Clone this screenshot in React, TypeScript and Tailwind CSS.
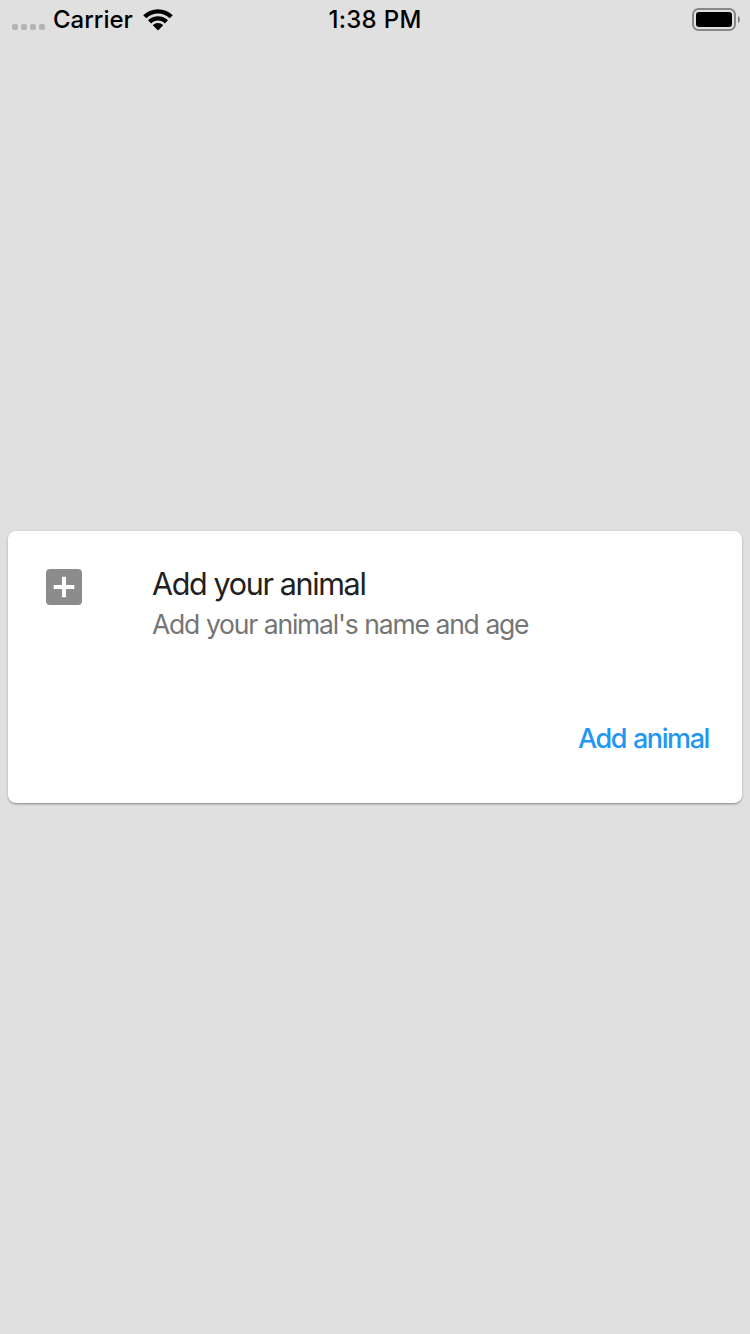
export default function App() {
  return (
    <div className="flex h-[1334px] w-[750px] flex-col overflow-hidden bg-[#e0e0e0] font-['Inter',sans-serif]">
      <header className="grid h-10 grid-cols-3 items-center pl-3 pr-[10px] text-[24px] leading-10 font-medium text-black">
        <div className="flex items-center">
          <div className="flex gap-[3px] pt-[14px]">
            <span className="size-[6px] rounded-[2px] bg-[#b4b4b4]" />
            <span className="size-[6px] rounded-[2px] bg-[#b4b4b4]" />
            <span className="size-[6px] rounded-[2px] bg-[#b4b4b4]" />
            <span className="size-[6px] rounded-[2px] bg-[#b4b4b4]" />
          </div>
          <span className="ml-2">Carrier</span>
          <svg className="ml-[10px]" width="30" height="22" viewBox="0 0 30 22">
            <path d="M0.2 6.2C8.2 -1.9 21.8 -1.9 29.8 6.2L26.7 9.3C20.3 3 9.7 3 3.3 9.3ZM5 11.2C10.5 5.8 19.5 5.8 25 11.2L21.8 14.4C18 10.6 12 10.6 8.2 14.4ZM9.8 16.2C12.7 13.4 17.3 13.4 20.2 16.2L15 21.6Z" />
          </svg>
        </div>
        <span className="-ml-[2px] text-center tracking-[0.3px]">1:38 PM</span>
        <svg className="justify-self-end" width="48" height="24" viewBox="0 0 48 24">
          <rect x="1" y="1" width="42" height="21" rx="5.5" fill="none" stroke="#888" strokeWidth="2" />
          <rect x="4" y="4" width="36" height="15" rx="3" />
          <path d="M46 8c2.4 1 2.4 6 0 7z" fill="#777" />
        </svg>
      </header>
      <main className="flex flex-1 flex-col px-2 pt-[491px]">
        <section className="flex h-[272px] flex-col rounded-lg bg-white shadow-[0_1px_3px_rgba(0,0,0,0.2),0_2px_2px_-1px_rgba(0,0,0,0.25)]">
          <div className="flex pl-[38px] pt-[34px]">
            <svg className="mt-1" width="36" height="36" viewBox="0 0 36 36">
              <rect width="36" height="36" rx="4" fill="#8c8c8c" />
              <path d="M7.7 18h20.6M18 7.7v20.6" stroke="white" strokeWidth="4" />
            </svg>
            <div className="ml-[70px]">
              <h1 className="text-[30.5px] leading-[38px] tracking-[-1.35px] text-[#212121]">Add your animal</h1>
              <p className="text-[26.5px] leading-[42px] tracking-[-1.2px] [word-spacing:0.5px] text-[#757575]">Add your animal's name and age</p>
            </div>
          </div>
          <button className="mt-[74px] mr-[33px] self-end whitespace-nowrap text-[27px] leading-[40px] font-medium tracking-[-1.4px] [word-spacing:1px] text-[#2196f3]">Add animal</button>
        </section>
      </main>
    </div>
  );
}
